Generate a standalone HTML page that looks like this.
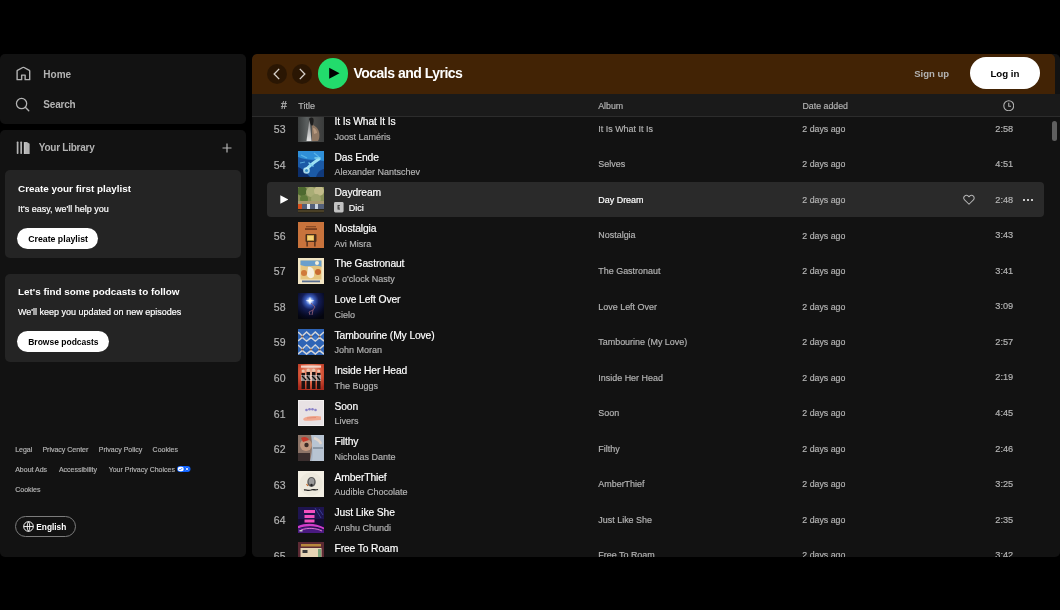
<!DOCTYPE html>
<html><head><meta charset="utf-8"><title>Spotify</title>
<style>
html,body{margin:0;padding:0;background:#000;width:1060px;height:610px;overflow:hidden}
body{position:relative;font-family:"Liberation Sans", sans-serif}
.t{position:absolute;line-height:0;white-space:nowrap;}
.r{-webkit-text-stroke:0.18px currentColor}
.panel{position:absolute;background:#121212;border-radius:5px}
.card{position:absolute;background:#242424;border-radius:5px}
.btn{position:absolute;background:#fff;border-radius:11px}
</style></head><body>
<div id="root" style="position:absolute;left:0;top:0;width:1060px;height:610px;will-change:transform"><div class="panel" style="left:0;top:54px;width:246px;height:70px"></div><svg style="position:absolute;left:14.5px;top:65.9px" width="16.8" height="15.6" viewBox="0 0 24 24" preserveAspectRatio="none"><path fill="#b3b3b3" d="M12.5 3.247a1 1 0 0 0-1 0L4 7.577V20h4.5v-6a1 1 0 0 1 1-1h5a1 1 0 0 1 1 1v6H20V7.577l-7.5-4.33zm-2-1.732a3 3 0 0 1 3 0l7.5 4.33a2 2 0 0 1 1 1.732V21a1 1 0 0 1-1 1h-6.5a1 1 0 0 1-1-1v-6h-3v6a1 1 0 0 1-1 1H3a1 1 0 0 1-1-1V7.577a2 2 0 0 1 1-1.732l7.5-4.33z"/></svg><div class="t" style="left:43.30px;top:74.63px;font-size:10px;color:#b3b3b3;font-weight:700;">Home</div><svg style="position:absolute;left:14.8px;top:97.3px" width="15" height="15" viewBox="0 0 24 24"><circle cx="10.5" cy="10.5" r="8.2" fill="none" stroke="#b3b3b3" stroke-width="2"/><path d="M16.5 16.5L22 22" stroke="#b3b3b3" stroke-width="2.2" stroke-linecap="round"/></svg><div class="t" style="left:43.30px;top:104.73px;font-size:10px;color:#b3b3b3;font-weight:700;letter-spacing:-0.2px;">Search</div><div class="panel" style="left:0;top:130px;width:246px;height:427px"></div><svg style="position:absolute;left:15.5px;top:140.8px" width="15" height="13.5" viewBox="0 0 24 22"><rect x="1" y="1" width="2.8" height="20" rx="1" fill="#b3b3b3"/><rect x="6.8" y="1" width="2.8" height="20" rx="1" fill="#b3b3b3"/><path d="M12.5 1.5h5l4.5 3V21h-9.5z" fill="#b3b3b3"/><path d="M14 3v18" stroke="#d8d8d8" stroke-width="1"/></svg><div class="t" style="left:38.80px;top:148.13px;font-size:10px;color:#b3b3b3;font-weight:700;letter-spacing:-0.25px;">Your Library</div><svg style="position:absolute;left:221.5px;top:142.5px" width="10" height="10" viewBox="0 0 10 10"><path d="M5 0.5V9.5M0.5 5H9.5" stroke="#b3b3b3" stroke-width="1.2"/></svg><div class="card" style="left:5px;top:170px;width:236px;height:88px"></div><div class="t" style="left:18.00px;top:188.56px;font-size:9.9px;color:#fff;font-weight:700;">Create your first playlist</div><div class="t r" style="left:18.00px;top:209.08px;font-size:9px;color:#fff;">It&#39;s easy, we&#39;ll help you</div><div class="btn" style="left:17px;top:228px;width:81px;height:21px"></div><div class="t" style="left:28.20px;top:238.66px;font-size:8.75px;color:#000;font-weight:700;">Create playlist</div><div class="card" style="left:5px;top:273.6px;width:236px;height:88px"></div><div class="t" style="left:18.00px;top:291.86px;font-size:9.9px;color:#fff;font-weight:700;">Let&#39;s find some podcasts to follow</div><div class="t r" style="left:18.00px;top:311.88px;font-size:9px;color:#fff;">We&#39;ll keep you updated on new episodes</div><div class="btn" style="left:17px;top:331px;width:92px;height:21px"></div><div class="t" style="left:28.20px;top:342.05px;font-size:8.5px;color:#000;font-weight:700;">Browse podcasts</div><div class="t r" style="left:15.20px;top:450.37px;font-size:7px;color:#b3b3b3;">Legal</div><div class="t r" style="left:42.40px;top:450.37px;font-size:7px;color:#b3b3b3;">Privacy Center</div><div class="t r" style="left:98.80px;top:450.37px;font-size:7px;color:#b3b3b3;">Privacy Policy</div><div class="t r" style="left:152.60px;top:450.37px;font-size:7px;color:#b3b3b3;">Cookies</div><div class="t r" style="left:15.20px;top:469.77px;font-size:7px;color:#b3b3b3;">About Ads</div><div class="t r" style="left:58.90px;top:469.77px;font-size:7px;color:#b3b3b3;">Accessibility</div><div class="t r" style="left:108.70px;top:469.77px;font-size:7px;color:#b3b3b3;">Your Privacy Choices</div><div class="t r" style="left:15.20px;top:489.87px;font-size:7px;color:#b3b3b3;">Cookies</div><svg style="position:absolute;left:177.3px;top:466.3px" width="13.5" height="6" viewBox="0 0 27 12"><rect x="0" y="0" width="27" height="12" rx="6" fill="#0f62fe"/><rect x="1.5" y="1.5" width="12" height="9" rx="4.5" fill="#fff"/><path d="M4.5 6l2 2 4-4" stroke="#0f62fe" stroke-width="1.5" fill="none"/><path d="M17.5 3.5l5 5M22.5 3.5l-5 5" stroke="#fff" stroke-width="1.5"/></svg><div style="position:absolute;left:15px;top:516px;width:59px;height:19px;border:1px solid #7c7c7c;border-radius:11px"></div><svg style="position:absolute;left:23px;top:521px" width="11" height="11" viewBox="0 0 16 16"><circle cx="8" cy="8" r="7" fill="none" stroke="#fff" stroke-width="1.4"/><path d="M1 8h14M8 1c-2.5 2.2-2.5 11.8 0 14M8 1c2.5 2.2 2.5 11.8 0 14" fill="none" stroke="#fff" stroke-width="1.3"/></svg><div class="t" style="left:36.30px;top:527.12px;font-size:8.3px;color:#fff;font-weight:700;">English</div><div class="panel" style="left:252px;top:54px;width:808px;height:503px;overflow:hidden"><div style="position:absolute;left:0;top:63px;width:808px;height:440px;overflow:hidden"><div style="position:absolute;left:-252px;top:-117px;width:1060px;height:610px"><div class="t r" style="right:774.50px;text-align:right;top:129.16px;font-size:10.5px;color:#b3b3b3;">53</div><div style="position:absolute;left:298.3px;top:115.50px;width:26px;height:26px;overflow:hidden"><svg width="26" height="26" viewBox="0 0 26 26"><defs><linearGradient id="a53" x1="0" x2="1"><stop offset="0" stop-color="#3a3d3d"/><stop offset=".35" stop-color="#5c6060"/><stop offset=".6" stop-color="#4a4a48"/><stop offset="1" stop-color="#3a3c3c"/></linearGradient><linearGradient id="b53" x1="0" y1="0" x2="0" y2="1"><stop offset="0" stop-color="#888"/><stop offset="1" stop-color="#f4f4f4"/></linearGradient></defs><rect width="26" height="26" fill="url(#a53)"/><path d="M8.5 25L11.5 2.5L13.5 25Z" fill="url(#b53)" opacity=".9"/><path d="M14 8C16 10 20 11 21 16C22 20 21 24 20 25H14Z" fill="#8f7762"/><path d="M15 12C17 12 19 14 19 17L16 18Z" fill="#b89a80"/><path d="M11 3C12 1 15 1 15.5 3C16 6 15 9 14 10L12.5 8Z" fill="#1c1c1c"/></svg></div><div class="t r" style="left:334.50px;top:122.28px;font-size:10.3px;color:#fff;letter-spacing:-0.12px;">It Is What It Is</div><div class="t r" style="left:334.50px;top:136.88px;font-size:9px;color:#b3b3b3;">Joost Laméris</div><div class="t r" style="left:598.30px;top:128.79px;font-size:8.95px;color:#b3b3b3;">It Is What It Is</div><div class="t r" style="left:802.30px;top:128.85px;font-size:8.8px;color:#b3b3b3;">2 days ago</div><div class="t r" style="right:46.80px;text-align:right;top:128.61px;font-size:9.2px;color:#b3b3b3;">2:58</div><div class="t r" style="right:774.50px;text-align:right;top:164.71px;font-size:10.5px;color:#b3b3b3;">54</div><div style="position:absolute;left:298.3px;top:151.05px;width:26px;height:26px;overflow:hidden"><svg width="26" height="26" viewBox="0 0 26 26"><rect width="26" height="26" fill="#1b5aa6"/><path d="M0 0H26V10C18 8 10 10 0 6Z" fill="#2f8fd8"/><path d="M0 16C6 18 10 24 12 26H0Z" fill="#0c2e6a"/><path d="M18 26C20 20 24 18 26 18V26Z" fill="#103a7c"/><path d="M3 4L9 7M16 2L21 6M2 12L7 11" stroke="#6cc4ee" stroke-width="1.2" opacity=".7"/><path d="M8 19C11 15 15 12 21 8" stroke="#9de0f2" stroke-width="3" stroke-linecap="round" fill="none"/><path d="M11 12L15 15M17 7L22 7" stroke="#7fd2ee" stroke-width="1.5" stroke-linecap="round"/><circle cx="8.5" cy="19.5" r="3.3" fill="#bff0f8" opacity=".85"/><circle cx="8.5" cy="19.5" r="1.5" fill="#3a90c8"/></svg></div><div class="t r" style="left:334.50px;top:157.83px;font-size:10.3px;color:#fff;letter-spacing:-0.12px;">Das Ende</div><div class="t r" style="left:334.50px;top:172.43px;font-size:9px;color:#b3b3b3;">Alexander Nantschev</div><div class="t r" style="left:598.30px;top:164.34px;font-size:8.95px;color:#b3b3b3;">Selves</div><div class="t r" style="left:802.30px;top:164.40px;font-size:8.8px;color:#b3b3b3;">2 days ago</div><div class="t r" style="right:46.80px;text-align:right;top:164.16px;font-size:9.2px;color:#b3b3b3;">4:51</div><div style="position:absolute;left:267.3px;top:181.85px;width:776.7px;height:35px;background:#2a2a2a;border-radius:4px"></div><svg style="position:absolute;left:279.5px;top:195.00px" width="8.5" height="9" viewBox="0 0 8.5 9"><path d="M0.3 0.3L8.3 4.5L0.3 8.7Z" fill="#fff"/></svg><div style="position:absolute;left:298.3px;top:186.60px;width:26px;height:26px;overflow:hidden"><svg width="26" height="26" viewBox="0 0 26 26"><rect width="26" height="26" fill="#8a925a"/><circle cx="4" cy="4" r="5" fill="#4e6a30"/><circle cx="13" cy="5" r="5" fill="#a9ad76"/><circle cx="21" cy="4" r="5" fill="#c2bb8a"/><circle cx="6" cy="12" r="4" fill="#5e7a3a"/><circle cx="18" cy="12" r="5" fill="#9fa46e"/><rect y="14" width="26" height="3" fill="#a89a70"/><rect y="17" width="26" height="5" fill="#54607a"/><rect x="0" y="17" width="4" height="5" fill="#d9501c"/><rect x="9" y="17" width="3" height="5" fill="#dfe4ee"/><rect x="17" y="17" width="3" height="5" fill="#c9d2e0"/><rect y="22" width="26" height="4" fill="#2a261c"/><rect y="23.5" width="26" height="1" fill="#6a5a30"/></svg></div><div class="t r" style="left:334.50px;top:193.38px;font-size:10.3px;color:#fff;letter-spacing:-0.12px;">Daydream</div><svg style="position:absolute;left:334px;top:202.25px" width="9.6" height="10.4" viewBox="0 0 96 104"><rect x="0" y="0" width="96" height="104" rx="14" fill="#c2c2c2"/><path d="M36 30h24v8H45v10h13v8H45v10h15v8H36z" fill="#2a2a2a"/></svg><div class="t r" style="left:348.80px;top:207.53px;font-size:9px;color:#fff;">Dici</div><div class="t r" style="left:598.30px;top:199.89px;font-size:8.95px;color:#fff;">Day Dream</div><div class="t r" style="left:802.30px;top:199.95px;font-size:8.8px;color:#b3b3b3;">2 days ago</div><div class="t r" style="right:46.80px;text-align:right;top:199.71px;font-size:9.2px;color:#b3b3b3;">2:48</div><svg style="position:absolute;left:962.5px;top:194.00px" width="12" height="11" viewBox="0 0 24 22"><path d="M12 20.5L3.2 11.8A5.3 5.3 0 0 1 10.7 4.3L12 5.6l1.3-1.3a5.3 5.3 0 0 1 7.5 7.5z" fill="none" stroke="#b3b3b3" stroke-width="2.1" stroke-linejoin="round"/></svg><div style="position:absolute;left:1022.90px;top:198.50px;width:2.2px;height:2.2px;border-radius:50%;background:#fff"></div><div style="position:absolute;left:1027.00px;top:198.50px;width:2.2px;height:2.2px;border-radius:50%;background:#fff"></div><div style="position:absolute;left:1031.10px;top:198.50px;width:2.2px;height:2.2px;border-radius:50%;background:#fff"></div><div class="t r" style="right:774.50px;text-align:right;top:235.81px;font-size:10.5px;color:#b3b3b3;">56</div><div style="position:absolute;left:298.3px;top:222.15px;width:26px;height:26px;overflow:hidden"><svg width="26" height="26" viewBox="0 0 26 26"><rect width="26" height="26" fill="#c8733c"/><rect x="8" y="4" width="10" height="1.3" fill="#8c4c26"/><rect x="7" y="6.3" width="12" height="1.5" fill="#6a3418"/><rect x="7.5" y="12" width="11" height="8" rx="1" fill="#4a2e1c"/><rect x="9" y="13.2" width="7" height="5.5" fill="#e8b850"/><rect x="10" y="14" width="5" height="4" fill="#fae08a" opacity=".7"/><rect x="8.5" y="20" width="1.2" height="4.5" fill="#3a2314"/><rect x="16.3" y="20" width="1.2" height="4.5" fill="#3a2314"/></svg></div><div class="t r" style="left:334.50px;top:228.93px;font-size:10.3px;color:#fff;letter-spacing:-0.12px;">Nostalgia</div><div class="t r" style="left:334.50px;top:243.53px;font-size:9px;color:#b3b3b3;">Avi Misra</div><div class="t r" style="left:598.30px;top:235.44px;font-size:8.95px;color:#b3b3b3;">Nostalgia</div><div class="t r" style="left:802.30px;top:235.50px;font-size:8.8px;color:#b3b3b3;">2 days ago</div><div class="t r" style="right:46.80px;text-align:right;top:235.26px;font-size:9.2px;color:#b3b3b3;">3:43</div><div class="t r" style="right:774.50px;text-align:right;top:271.36px;font-size:10.5px;color:#b3b3b3;">57</div><div style="position:absolute;left:298.3px;top:257.70px;width:26px;height:26px;overflow:hidden"><svg width="26" height="26" viewBox="0 0 26 26"><rect width="26" height="26" fill="#f3e6c4"/><rect x="2.5" y="2.5" width="21" height="19" fill="#e6c57e"/><path d="M2.5 2.5H23.5V9C18 6 10 10 2.5 7Z" fill="#6a9fcc"/><path d="M10 9C14 8 17 12 16 18C15 21 10 21 9 17Z" fill="#f5efe0"/><circle cx="6" cy="15" r="3" fill="#d07a3a"/><circle cx="20" cy="14" r="3" fill="#c86a30"/><circle cx="19" cy="5" r="2" fill="#f8f0d8"/><rect x="4" y="22.5" width="18" height="1.8" fill="#5a6e90"/></svg></div><div class="t r" style="left:334.50px;top:264.48px;font-size:10.3px;color:#fff;letter-spacing:-0.12px;">The Gastronaut</div><div class="t r" style="left:334.50px;top:279.08px;font-size:9px;color:#b3b3b3;">9 o&#39;clock Nasty</div><div class="t r" style="left:598.30px;top:270.99px;font-size:8.95px;color:#b3b3b3;">The Gastronaut</div><div class="t r" style="left:802.30px;top:271.05px;font-size:8.8px;color:#b3b3b3;">2 days ago</div><div class="t r" style="right:46.80px;text-align:right;top:270.81px;font-size:9.2px;color:#b3b3b3;">3:41</div><div class="t r" style="right:774.50px;text-align:right;top:306.91px;font-size:10.5px;color:#b3b3b3;">58</div><div style="position:absolute;left:298.3px;top:293.25px;width:26px;height:26px;overflow:hidden"><svg width="26" height="26" viewBox="0 0 26 26"><defs><radialGradient id="a58" cx=".46" cy=".3" r=".75"><stop offset="0" stop-color="#ffffff"/><stop offset=".08" stop-color="#bcd4ff"/><stop offset=".22" stop-color="#3c5fc0"/><stop offset=".45" stop-color="#141e58"/><stop offset=".8" stop-color="#070a22"/><stop offset="1" stop-color="#04050e"/></radialGradient></defs><rect width="26" height="26" fill="url(#a58)"/><path d="M12 3.5L12.8 7L16.5 7.8L12.8 8.6L12 12L11.2 8.6L7.5 7.8L11.2 7Z" fill="#fff"/><path d="M13 10L17 14L15 17L14 22M15 17L11 19L12 22" stroke="#8a5a70" stroke-width=".9" fill="none"/></svg></div><div class="t r" style="left:334.50px;top:300.03px;font-size:10.3px;color:#fff;letter-spacing:-0.12px;">Love Left Over</div><div class="t r" style="left:334.50px;top:314.63px;font-size:9px;color:#b3b3b3;">Cielo</div><div class="t r" style="left:598.30px;top:306.54px;font-size:8.95px;color:#b3b3b3;">Love Left Over</div><div class="t r" style="left:802.30px;top:306.60px;font-size:8.8px;color:#b3b3b3;">2 days ago</div><div class="t r" style="right:46.80px;text-align:right;top:306.36px;font-size:9.2px;color:#b3b3b3;">3:09</div><div class="t r" style="right:774.50px;text-align:right;top:342.46px;font-size:10.5px;color:#b3b3b3;">59</div><div style="position:absolute;left:298.3px;top:328.80px;width:26px;height:26px;overflow:hidden"><svg width="26" height="26" viewBox="0 0 26 26"><rect width="26" height="26" fill="#2e64b6"/><g fill="none" stroke="#e6e2dc" stroke-width="1.6" opacity=".9"><path d="M0 3L4.3 7L8.6 3L13 7L17.3 3L21.6 7L26 3"/><path d="M0 12L4.3 8.5L8.6 12L13 8.5L17.3 12L21.6 8.5L26 12"/><path d="M0 16L4.3 20L8.6 16L13 20L17.3 16L21.6 20L26 16"/><path d="M0 25L4.3 21.5L8.6 25L13 21.5L17.3 25L21.6 21.5L26 25"/></g><g fill="#8a5a3a"><circle cx="4.3" cy="7.5" r="1"/><circle cx="13" cy="7.5" r="1"/><circle cx="21.6" cy="7.5" r="1"/><circle cx="4.3" cy="20.5" r="1"/><circle cx="13" cy="20.5" r="1"/><circle cx="21.6" cy="20.5" r="1"/></g><g fill="#4a86d8" opacity=".6"><circle cx="8.6" cy="9" r="2"/><circle cx="17.3" cy="9" r="2"/><circle cx="8.6" cy="19" r="2"/><circle cx="17.3" cy="19" r="2"/></g></svg></div><div class="t r" style="left:334.50px;top:335.58px;font-size:10.3px;color:#fff;letter-spacing:-0.12px;">Tambourine (My Love)</div><div class="t r" style="left:334.50px;top:350.18px;font-size:9px;color:#b3b3b3;">John Moran</div><div class="t r" style="left:598.30px;top:342.09px;font-size:8.95px;color:#b3b3b3;">Tambourine (My Love)</div><div class="t r" style="left:802.30px;top:342.15px;font-size:8.8px;color:#b3b3b3;">2 days ago</div><div class="t r" style="right:46.80px;text-align:right;top:341.91px;font-size:9.2px;color:#b3b3b3;">2:57</div><div class="t r" style="right:774.50px;text-align:right;top:378.01px;font-size:10.5px;color:#b3b3b3;">60</div><div style="position:absolute;left:298.3px;top:364.35px;width:26px;height:26px;overflow:hidden"><svg width="26" height="26" viewBox="0 0 26 26"><defs><radialGradient id="a60" cx=".5" cy=".35" r=".7"><stop offset="0" stop-color="#f0b8a0"/><stop offset=".6" stop-color="#d8583a"/><stop offset="1" stop-color="#a82a1c"/></radialGradient></defs><rect width="26" height="26" fill="url(#a60)"/><rect x="3" y="1.5" width="20" height="2.2" fill="#f6e4dc" opacity=".85"/><g fill="#1a1212"><rect x="3.5" y="9" width="3.5" height="16"/><rect x="8.5" y="8" width="3.5" height="17"/><rect x="14" y="8" width="3.5" height="17"/><rect x="19" y="9" width="3.5" height="16"/></g><g fill="#e9c6b0"><circle cx="5.2" cy="7" r="1.6"/><circle cx="10.2" cy="6.2" r="1.6"/><circle cx="15.7" cy="6.2" r="1.6"/><circle cx="20.7" cy="7" r="1.6"/></g><path d="M3 11L23 11L23 17L3 17Z" fill="#f2f2f2" opacity=".55"/><path d="M4 12L8 16M9 12L12 16M14 12L18 16M19 12L22 16" stroke="#111" stroke-width="1.3"/></svg></div><div class="t r" style="left:334.50px;top:371.13px;font-size:10.3px;color:#fff;letter-spacing:-0.12px;">Inside Her Head</div><div class="t r" style="left:334.50px;top:385.73px;font-size:9px;color:#b3b3b3;">The Buggs</div><div class="t r" style="left:598.30px;top:377.64px;font-size:8.95px;color:#b3b3b3;">Inside Her Head</div><div class="t r" style="left:802.30px;top:377.70px;font-size:8.8px;color:#b3b3b3;">2 days ago</div><div class="t r" style="right:46.80px;text-align:right;top:377.46px;font-size:9.2px;color:#b3b3b3;">2:19</div><div class="t r" style="right:774.50px;text-align:right;top:413.56px;font-size:10.5px;color:#b3b3b3;">61</div><div style="position:absolute;left:298.3px;top:399.90px;width:26px;height:26px;overflow:hidden"><svg width="26" height="26" viewBox="0 0 26 26"><rect width="26" height="26" fill="#f2efef"/><rect x="1" y="1" width="24" height="24" fill="#e8e2e4"/><g fill="#8a82c8"><circle cx="8.5" cy="10" r="1.3"/><circle cx="11.5" cy="9.3" r="1.3"/><circle cx="14.5" cy="9.3" r="1.3"/><circle cx="17.5" cy="10" r="1.3"/></g><path d="M5 19C8 16 14 15.5 23 16.5L23 20C16 20.5 10 21 6 20.5Z" fill="#f0a890"/><path d="M9 18L18 17.5" stroke="#d87a66" stroke-width=".6"/></svg></div><div class="t r" style="left:334.50px;top:406.68px;font-size:10.3px;color:#fff;letter-spacing:-0.12px;">Soon</div><div class="t r" style="left:334.50px;top:421.28px;font-size:9px;color:#b3b3b3;">Livers</div><div class="t r" style="left:598.30px;top:413.19px;font-size:8.95px;color:#b3b3b3;">Soon</div><div class="t r" style="left:802.30px;top:413.25px;font-size:8.8px;color:#b3b3b3;">2 days ago</div><div class="t r" style="right:46.80px;text-align:right;top:413.01px;font-size:9.2px;color:#b3b3b3;">4:45</div><div class="t r" style="right:774.50px;text-align:right;top:449.11px;font-size:10.5px;color:#b3b3b3;">62</div><div style="position:absolute;left:298.3px;top:435.45px;width:26px;height:26px;overflow:hidden"><svg width="26" height="26" viewBox="0 0 26 26"><rect width="26" height="26" fill="#a8b4c4"/><path d="M12 0H26V26H14C16 18 14 8 12 0Z" fill="#b8c4d2"/><path d="M0 0H13C14 6 15 14 12 26H0Z" fill="#8c7468"/><circle cx="8" cy="10" r="6" fill="#c49a80"/><path d="M3 3C6 1 10 2 11 5L5 7Z" fill="#c8382a"/><circle cx="8.5" cy="10" r="2.2" fill="#3a2a24"/><path d="M0 18H12V26H0Z" fill="#3a2e2e"/><path d="M16 3C19 4 22 6 23 9" stroke="#e2d6cc" stroke-width="2.5" fill="none"/><path d="M15 13H25" stroke="#223040" stroke-width="1" opacity=".6"/></svg></div><div class="t r" style="left:334.50px;top:442.23px;font-size:10.3px;color:#fff;letter-spacing:-0.12px;">Filthy</div><div class="t r" style="left:334.50px;top:456.83px;font-size:9px;color:#b3b3b3;">Nicholas Dante</div><div class="t r" style="left:598.30px;top:448.74px;font-size:8.95px;color:#b3b3b3;">Filthy</div><div class="t r" style="left:802.30px;top:448.80px;font-size:8.8px;color:#b3b3b3;">2 days ago</div><div class="t r" style="right:46.80px;text-align:right;top:448.56px;font-size:9.2px;color:#b3b3b3;">2:46</div><div class="t r" style="right:774.50px;text-align:right;top:484.66px;font-size:10.5px;color:#b3b3b3;">63</div><div style="position:absolute;left:298.3px;top:471.00px;width:26px;height:26px;overflow:hidden"><svg width="26" height="26" viewBox="0 0 26 26"><rect width="26" height="26" fill="#f3efe4"/><circle cx="13" cy="13" r="11.5" fill="#ece8dc"/><ellipse cx="13.5" cy="11" rx="4.2" ry="5" fill="#5a5a5a"/><ellipse cx="13.5" cy="10.5" rx="2.8" ry="3.5" fill="#9a9a9a"/><circle cx="13.5" cy="14" r="1.2" fill="#222"/><path d="M8.5 13L10 15" stroke="#c86a2a" stroke-width="1.2"/><path d="M6 19C8 18.5 10 20 13 19C15 18 17 19.5 20 18.5" stroke="#222" stroke-width="1.3" fill="none"/></svg></div><div class="t r" style="left:334.50px;top:477.78px;font-size:10.3px;color:#fff;letter-spacing:-0.12px;">AmberThief</div><div class="t r" style="left:334.50px;top:492.38px;font-size:9px;color:#b3b3b3;">Audible Chocolate</div><div class="t r" style="left:598.30px;top:484.29px;font-size:8.95px;color:#b3b3b3;">AmberThief</div><div class="t r" style="left:802.30px;top:484.35px;font-size:8.8px;color:#b3b3b3;">2 days ago</div><div class="t r" style="right:46.80px;text-align:right;top:484.11px;font-size:9.2px;color:#b3b3b3;">3:25</div><div class="t r" style="right:774.50px;text-align:right;top:520.21px;font-size:10.5px;color:#b3b3b3;">64</div><div style="position:absolute;left:298.3px;top:506.55px;width:26px;height:26px;overflow:hidden"><svg width="26" height="26" viewBox="0 0 26 26"><rect width="26" height="26" fill="#140c34"/><path d="M0 0H26V12H0Z" fill="#1e1450"/><path d="M17 1L23 11M21 2L25 8" stroke="#4a5ac0" stroke-width="1" opacity=".6"/><g fill="#f050c0"><rect x="6" y="3" width="11" height="3"/><rect x="6.5" y="8" width="10" height="3"/><rect x="6.5" y="12.5" width="10" height="3"/></g><path d="M0 19C8 15.5 18 16 26 20.5V22.5C18 18.5 8 18.5 0 21.5Z" fill="#d03ccc"/><path d="M0 21.5C8 19 18 19.5 26 23V26H0Z" fill="#4a1a80"/><path d="M3 23C10 20.5 18 21 24 24" stroke="#ff8ae0" stroke-width=".8" fill="none"/><rect x="1.5" y="23" width="3" height="1.5" fill="#ccc"/></svg></div><div class="t r" style="left:334.50px;top:513.33px;font-size:10.3px;color:#fff;letter-spacing:-0.12px;">Just Like She</div><div class="t r" style="left:334.50px;top:527.93px;font-size:9px;color:#b3b3b3;">Anshu Chundi</div><div class="t r" style="left:598.30px;top:519.84px;font-size:8.95px;color:#b3b3b3;">Just Like She</div><div class="t r" style="left:802.30px;top:519.90px;font-size:8.8px;color:#b3b3b3;">2 days ago</div><div class="t r" style="right:46.80px;text-align:right;top:519.66px;font-size:9.2px;color:#b3b3b3;">2:35</div><div class="t r" style="right:774.50px;text-align:right;top:555.76px;font-size:10.5px;color:#b3b3b3;">65</div><div style="position:absolute;left:298.3px;top:542.10px;width:26px;height:26px;overflow:hidden"><svg width="26" height="26" viewBox="0 0 26 26"><rect width="26" height="26" fill="#5c2a34"/><rect x="3" y="2" width="20" height="2.5" fill="#b8883c"/><rect x="2.5" y="6" width="21" height="20" fill="#e6d4b4"/><rect x="4.5" y="8" width="5" height="3" fill="#3a3a3a"/><circle cx="17" cy="20" r="2" fill="#3a1a1a"/><rect x="20" y="7" width="3" height="19" fill="#7aa47a"/></svg>
</div><div class="t r" style="left:334.50px;top:548.88px;font-size:10.3px;color:#fff;letter-spacing:-0.12px;">Free To Roam</div><div class="t r" style="left:334.50px;top:563.48px;font-size:9px;color:#b3b3b3;">Various Artists</div><div class="t r" style="left:598.30px;top:555.39px;font-size:8.95px;color:#b3b3b3;">Free To Roam</div><div class="t r" style="left:802.30px;top:555.45px;font-size:8.8px;color:#b3b3b3;">2 days ago</div><div class="t r" style="right:46.80px;text-align:right;top:555.21px;font-size:9.2px;color:#b3b3b3;">3:42</div></div></div><div style="position:absolute;left:0;top:0;width:803px;height:40px;background:#422305;border-radius:5px 5px 0 0"></div><div style="position:absolute;left:-252px;top:-54px;width:1060px;height:610px"><div style="position:absolute;left:266.7px;top:63.7px;width:20px;height:20px;border-radius:50%;background:rgba(0,0,0,0.36)"></div><svg style="position:absolute;left:266.7px;top:63.7px" width="20" height="20" viewBox="0 0 20 20"><path d="M12.2 4.9L7.2 10l5 5.1" fill="none" stroke="#d6d0ca" stroke-width="1.35"/></svg><div style="position:absolute;left:292px;top:63.7px;width:20px;height:20px;border-radius:50%;background:rgba(0,0,0,0.36)"></div><svg style="position:absolute;left:292px;top:63.7px" width="20" height="20" viewBox="0 0 20 20"><path d="M7.8 4.9L12.8 10l-5 5.1" fill="none" stroke="#d6d0ca" stroke-width="1.35"/></svg><div style="position:absolute;left:317.8px;top:58.3px;width:30.5px;height:30.5px;border-radius:50%;background:#22dc6c"></div><svg style="position:absolute;left:317.8px;top:58.3px" width="30.5" height="30.5" viewBox="0 0 30 30"><path d="M11 9.5L21.2 15L11 20.5Z" fill="#000"/></svg><div class="t" style="left:353.40px;top:72.64px;font-size:14px;color:#fff;font-weight:700;letter-spacing:-0.5px;">Vocals and Lyrics</div><div class="t" style="left:914.20px;top:73.90px;font-size:9.5px;color:#b3b3b3;font-weight:700;">Sign up</div><div style="position:absolute;left:969.8px;top:57.2px;width:70.4px;height:32px;border-radius:16px;background:#fff"></div><div class="t" style="left:990.40px;top:74.13px;font-size:9.7px;color:#000;font-weight:700;">Log in</div><div style="position:absolute;left:252px;top:94px;width:808px;height:22.5px;background:#1a1a1a"></div><div style="position:absolute;left:252px;top:116.3px;width:808px;height:1px;background:#2c2c2c"></div><div class="t r" style="right:773.10px;text-align:right;top:105.26px;font-size:10.5px;color:#c0c0c0;">#</div><div class="t r" style="left:298.30px;top:105.68px;font-size:9px;color:#b3b3b3;">Title</div><div class="t r" style="left:598.20px;top:105.75px;font-size:8.8px;color:#b3b3b3;">Album</div><div class="t r" style="left:802.50px;top:105.75px;font-size:8.8px;color:#b3b3b3;">Date added</div><svg style="position:absolute;left:1002.7px;top:99.8px" width="11.5" height="11.5" viewBox="0 0 16 16"><circle cx="8" cy="8" r="6.9" fill="none" stroke="#b3b3b3" stroke-width="1.5"/><path d="M8 3.8V8.6h3.2" fill="none" stroke="#b3b3b3" stroke-width="1.5"/></svg><div style="position:absolute;left:1052px;top:120.5px;width:5px;height:20px;border-radius:2.5px;background:#5f5f5f"></div></div></div></div>
</body></html>
